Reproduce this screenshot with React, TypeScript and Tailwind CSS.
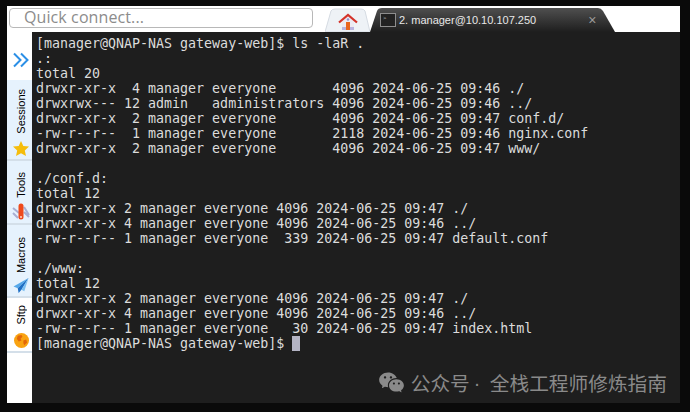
import { RiWechatFill } from "react-icons/ri";

const output = `[manager@QNAP-NAS gateway-web]$ ls -laR .
.:
total 20
drwxr-xr-x  4 manager everyone       4096 2024-06-25 09:46 ./
drwxrwx--- 12 admin   administrators 4096 2024-06-25 09:46 ../
drwxr-xr-x  2 manager everyone       4096 2024-06-25 09:47 conf.d/
-rw-r--r--  1 manager everyone       2118 2024-06-25 09:46 nginx.conf
drwxr-xr-x  2 manager everyone       4096 2024-06-25 09:47 www/

./conf.d:
total 12
drwxr-xr-x 2 manager everyone 4096 2024-06-25 09:47 ./
drwxr-xr-x 4 manager everyone 4096 2024-06-25 09:46 ../
-rw-r--r-- 1 manager everyone  339 2024-06-25 09:47 default.conf

./www:
total 12
drwxr-xr-x 2 manager everyone 4096 2024-06-25 09:47 ./
drwxr-xr-x 4 manager everyone 4096 2024-06-25 09:46 ../
-rw-r--r-- 1 manager everyone   30 2024-06-25 09:47 index.html
[manager@QNAP-NAS gateway-web]$ `;

function HomeIcon() {
  return (
    <svg width="20" height="18" viewBox="0 0 20 18">
      <path d="M4 8.5 10 3.5l6 5V17H4z" fill="#eceaf2" />
      <rect x="4" y="14" width="12" height="3" fill="#b9b4e0" />
      <rect x="8" y="9" width="4" height="8" fill="#e8651f" />
      <circle cx="10" cy="6.5" r="1.2" fill="#8f8fd0" />
      <path d="M1 9.5 10 2l9 7.5" fill="none" stroke="#d4332a" strokeWidth="2.2" />
    </svg>
  );
}

function StarIcon() {
  return (
    <svg width="16" height="15" viewBox="0 0 16 15">
      <path d="M8 0l2.3 5 5.7.6-4.2 3.8 1.2 5.6L8 12.2 3 15l1.2-5.6L0 5.6 5.7 5z" fill="#f5bd0c" />
    </svg>
  );
}

function ToolsIcon() {
  return (
    <svg width="18" height="17" viewBox="0 0 18 17">
      <path d="M1 5l6 5M1 10l5 5M12 4l5 8M12 9l5 5" stroke="#a9aed2" strokeWidth="2" fill="none" />
      <rect x="6.5" y="0.5" width="5" height="16" rx="2.5" fill="#ee4a1c" />
      <circle cx="9" cy="14" r="1" fill="#ffd9c8" />
    </svg>
  );
}

function PlaneIcon() {
  return (
    <svg width="16" height="15" viewBox="0 0 16 16">
      <path d="M16 0 0 9l4.5 2z" fill="#55a8ea" />
      <path d="M16 0 4.5 11 5.5 16l3-3.5z" fill="#1f6fc4" />
      <path d="M16 0 8.5 12.5l3 1.5z" fill="#7cc0f2" />
    </svg>
  );
}

function GlobeIcon() {
  return (
    <svg width="15" height="15" viewBox="0 0 16 16">
      <circle cx="8" cy="8" r="8" fill="#f9a312" />
      <path d="M4 3l4-1 1 2-2 2 1 2-3 1-2-3zM10 8l3-1 1 3-3 3-1-2z" fill="#e2670a" />
    </svg>
  );
}

function SideTab({
  label,
  icon,
  active,
  className,
}: {
  label: string;
  icon: React.ReactNode;
  active?: boolean;
  className: string;
}) {
  return (
    <div
      className={`flex flex-col items-center justify-end border-b-2 border-[#d4dfe9] pb-[3px] pl-[3px] ${className} ${
        active ? "bg-white" : "bg-[#e6f2fd]"
      }`}
    >
      <span className="rotate-180 font-['Liberation_Sans',sans-serif] text-[11px] leading-[14px] text-black [writing-mode:vertical-rl]">
        {label}
      </span>
      {icon}
    </div>
  );
}

export default function App() {
  return (
    <div className="h-[412px] w-[690px] overflow-hidden bg-[#0a0a0a] pt-[6px] pr-[10px] pb-[9px] pl-[7px]">
      <div className="flex h-full flex-col bg-white">
        {/* Top bar */}
        <div className="flex h-[26px] shrink-0 items-end pl-[2px]">
          <div className="mb-[4px] flex h-[20px] w-[304px] items-center rounded-[4px] border border-[#b8b8b8] bg-white pb-[2px] pl-[14px] font-['Open_Sans',sans-serif] text-[16px] tracking-[0.1px] text-[#8c8c8c]">
            Quick connect...
          </div>

          <div className="relative ml-[12px] flex h-[24px] w-[45px] items-center justify-center">
            <svg className="absolute inset-0" width="45" height="24" viewBox="0 0 45 24">
              <path d="M0 24 6 3Q7 1 10 1H36Q39 1 40 3L45 24Z" fill="#eef2f6" stroke="#d5dbe2" />
            </svg>
            <div className="relative mt-[3px]">
              <HomeIcon />
            </div>
          </div>

          <div className="relative flex h-[24px] w-[245px] items-center pl-[10px]">
            <svg className="absolute inset-0" width="245" height="24" viewBox="0 0 245 24">
              <defs>
                <linearGradient id="activeTab" x1="0" y1="0" x2="0" y2="1">
                  <stop offset="0" stopColor="#4f4f4f" />
                  <stop offset="1" stopColor="#1e1e1e" />
                </linearGradient>
              </defs>
              <path d="M0 24 7 3Q8 0 12 0H228Q231 0 233 3L245 24Z" fill="url(#activeTab)" />
            </svg>
            <div className="relative flex h-[14px] w-[16px] border border-[#8e8e8e] bg-[#222] pl-[2px] text-[6px] leading-[8px] text-[#cfcfcf]">
              &gt;
            </div>
            <span className="relative ml-[3px] font-['Liberation_Sans',sans-serif] text-[11px] text-[#e8e8e8]">
              2. manager@10.10.107.250
            </span>
            <span className="relative ml-[52px] font-['Liberation_Sans',sans-serif] text-[14px] leading-none text-[#9a9a9a]">
              ×
            </span>
          </div>
        </div>

        <div className="flex min-h-0 flex-1">
          {/* Sidebar */}
          <div className="flex w-[25px] shrink-0 flex-col bg-white">
            <div className="flex h-[48px] items-center justify-center pt-[8px] pl-[3px]">
              <svg width="16" height="16" viewBox="0 0 16 16" fill="none" stroke="#2b8fe6" strokeWidth="2">
                <path d="M1 1.5 7.5 8 1 14.5M8 1.5 14.5 8 8 14.5" />
              </svg>
            </div>
            <SideTab label="Sessions" icon={<StarIcon />} className="h-[81px] gap-[7px]" />
            <SideTab label="Tools" icon={<ToolsIcon />} className="h-[64px] gap-[5px]" />
            <SideTab label="Macros" icon={<PlaneIcon />} className="h-[73px] gap-[5px]" />
            <SideTab label="Sftp" icon={<GlobeIcon />} active className="h-[55px] gap-[8px]" />
          </div>

          {/* Terminal */}
          <div className="relative min-w-0 flex-1 bg-[#1e1e1e] pt-[4px] pl-[4px]">
            <pre className="font-['DejaVu_Sans_Mono',monospace] text-[13.3px] leading-[15px] text-[#dcdcdc]">
              {output}
              <span className="inline-block h-[15px] w-[8px] bg-[#b4b4c4] align-top" />
            </pre>
            <div className="absolute right-[13px] bottom-[7px] flex items-center gap-[6px] font-['Noto_Sans_CJK_SC',sans-serif] text-[19.7px] leading-[24px] text-[#8a8a8a]">
              <RiWechatFill size={27} />
              <span className="flex">
                公众号
                <span className="w-[20px] pl-[4px] font-['Liberation_Sans',sans-serif]">·</span>
                全栈工程师修炼指南
              </span>
            </div>
          </div>
        </div>
      </div>
    </div>
  );
}
